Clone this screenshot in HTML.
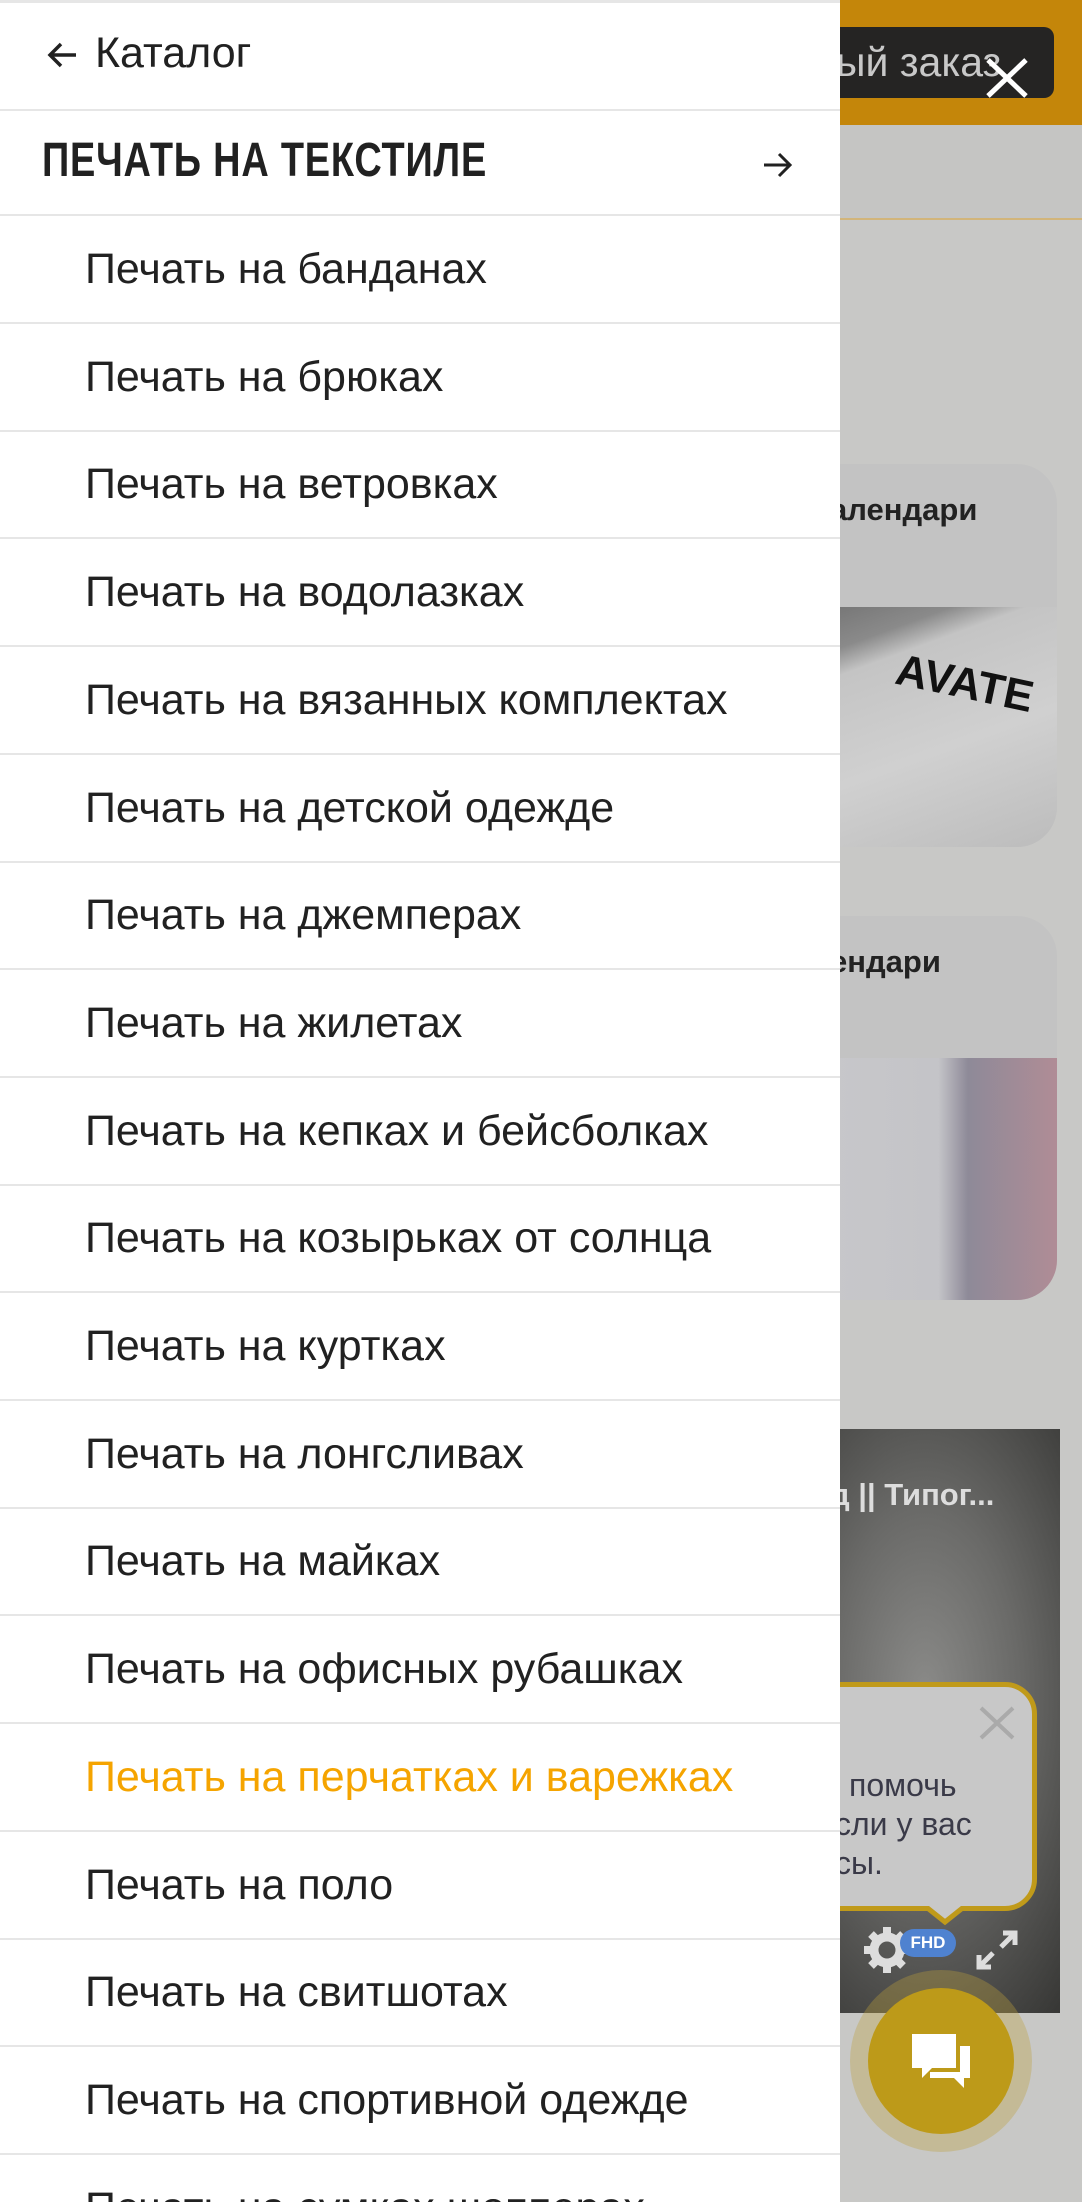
<!DOCTYPE html>
<html><head><meta charset="utf-8"><style>
*{margin:0;padding:0;box-sizing:border-box}
html,body{width:1082px;height:2202px;overflow:hidden}
body{background:#c8c8c6;position:relative;font-family:"Liberation Sans",sans-serif}
.abs{position:absolute}
#panel{position:absolute;left:0;top:0;width:840px;height:2202px;background:#fff;border-top:3px solid #e6e6e6;overflow:hidden}
.row{position:absolute;left:0;width:840px;height:108px;border-bottom:2px solid #e6e6e6;color:#212121;font-size:43px;line-height:106px;padding-left:85px;white-space:nowrap}
</style></head><body>
<div class="abs" style="left:0;top:0;width:1082px;height:125px;background:#c4860a"></div>
<div class="abs" style="left:780px;top:27px;width:274px;height:71px;background:#252423;border-radius:10px;color:#c8c8c8;font-size:41px;line-height:71px;padding-left:56px">ый заказ</div>
<svg class="abs" style="left:984px;top:56px" width="46" height="44"><path d="M4 4L42 40M42 4L4 40" stroke="#fff" stroke-width="5"/></svg>
<div class="abs" style="left:0;top:125px;width:1082px;height:95px;background:#c5c5c3;border-bottom:2px solid #d2b57a"></div>

<div class="abs" style="left:760px;top:464px;width:297px;height:383px;background:#c3c3c3;border-radius:40px;overflow:hidden">
 <div class="abs" style="left:70px;top:28px;font-size:31px;font-weight:bold;color:#222">алендари</div>
 <div class="abs" style="left:0;top:143px;width:297px;height:240px;background:linear-gradient(160deg,#6a6a6a 0%,#8a8a8a 20%,#c4c4c4 28%,#d0d0d0 60%,#bcbcbc 100%)"></div>
 <div class="abs" style="left:135px;top:195px;font-size:44px;font-weight:bold;color:#111;transform:rotate(12deg)">AVATE</div>
</div>
<div class="abs" style="left:760px;top:916px;width:297px;height:384px;background:#c3c3c3;border-radius:40px;overflow:hidden">
 <div class="abs" style="left:70px;top:28px;font-size:31px;font-weight:bold;color:#222">ендари</div>
 <div class="abs" style="left:0;top:142px;width:297px;height:242px;background:linear-gradient(90deg,#c9c9cb 0%,#c4c4c8 60%,#8e8a98 70%,#b08c96 100%)"></div>
</div>

<div class="abs" style="left:760px;top:1429px;width:300px;height:584px;background:radial-gradient(ellipse at 55% 45%,#8a8a88 0%,#6a6a68 40%,#2e2e2c 100%)">
 <div class="abs" style="left:70px;top:48px;font-size:31px;font-weight:bold;color:#ddd">д || Типог...</div>
</div>
<div class="abs" style="left:760px;top:1682px;width:277px;height:229px;background:#c8c8c8;border:5px solid #c09a1a;border-radius:32px"></div>
<svg class="abs" style="left:925px;top:1906px" width="40" height="20"><path d="M0 0L20 16L40 0" fill="#c8c8c8" stroke="#c09a1a" stroke-width="5"/></svg>
<svg class="abs" style="left:978px;top:1705px" width="38" height="36"><path d="M3 3L35 33M35 3L3 33" stroke="#aaa" stroke-width="4"/></svg>
<div class="abs" style="left:849px;top:1766px;font-size:32px;color:#3a3a48;line-height:39px">помочь</div>
<div class="abs" style="left:835px;top:1805px;font-size:32px;color:#3a3a48;line-height:39px">сли у вас</div>
<div class="abs" style="left:835px;top:1844px;font-size:32px;color:#3a3a48;line-height:39px">сы.</div>
<svg class="abs" style="left:862px;top:1925px" width="50" height="50"><circle cx="25" cy="25" r="13" fill="none" stroke="#ddd" stroke-width="9"/><g stroke="#ddd" stroke-width="8"><path d="M25 2v8M25 40v8M2 25h8M40 25h8M9 9l6 6M35 35l6 6M9 41l6-6M41 9l-6 6"/></g></svg>
<div class="abs" style="left:900px;top:1929px;width:56px;height:28px;border-radius:14px;background:#4f82d0;color:#fff;font-size:17px;font-weight:bold;text-align:center;line-height:28px">FHD</div>
<svg class="abs" style="left:974px;top:1928px" width="46" height="44"><g stroke="#ddd" stroke-width="5" fill="none"><path d="M5 39L19 25M5 27v12h12M41 5L27 19M29 5h12v12"/></g></svg>
<div class="abs" style="left:850px;top:1970px;width:182px;height:182px;border-radius:50%;background:rgba(190,160,60,.35)"></div>
<div class="abs" style="left:868px;top:1988px;width:146px;height:146px;border-radius:50%;background:#bd9a19"></div>
<svg class="abs" style="left:908px;top:2030px" width="66" height="62"><path d="M4 4h44v34H24l-10 10V38H4z" fill="#fff"/><path d="M52 16h10v32h-6v10l-10-10H22v-6h30z" fill="#fff"/></svg>

<div id="panel">
 <div class="row" style="top:-3px;height:111px;line-height:106px;padding-left:95px">Каталог</div>
 <svg class="abs" style="left:46px;top:38px" width="32" height="28"><path d="M30 14H4M15 3L4 14l11 11" stroke="#212121" stroke-width="3.5" fill="none"/></svg>
 <div class="row" style="top:105px;padding-left:0"><div style="position:absolute;left:42px;top:0;font-weight:bold;font-size:48px;transform:scaleX(0.79);transform-origin:left center;letter-spacing:1px">ПЕЧАТЬ НА ТЕКСТИЛЕ</div></div>
 <svg class="abs" style="left:762px;top:148px" width="32" height="28"><path d="M2 14h26M17 3l11 11-11 11" stroke="#212121" stroke-width="3" fill="none"/></svg>
 <div class="row" style="top:213px">Печать на банданах</div>
 <div class="row" style="top:320.7px">Печать на брюках</div>
 <div class="row" style="top:428.4px">Печать на ветровках</div>
 <div class="row" style="top:536.1px">Печать на водолазках</div>
 <div class="row" style="top:643.8px">Печать на вязанных комплектах</div>
 <div class="row" style="top:751.5px">Печать на детской одежде</div>
 <div class="row" style="top:859.2px">Печать на джемперах</div>
 <div class="row" style="top:966.9px">Печать на жилетах</div>
 <div class="row" style="top:1074.6px">Печать на кепках и бейсболках</div>
 <div class="row" style="top:1182.3px">Печать на козырьках от солнца</div>
 <div class="row" style="top:1290px">Печать на куртках</div>
 <div class="row" style="top:1397.7px">Печать на лонгсливах</div>
 <div class="row" style="top:1505.4px">Печать на майках</div>
 <div class="row" style="top:1613.1px">Печать на офисных рубашках</div>
 <div class="row" style="top:1720.8px;color:#f5a400">Печать на перчатках и варежках</div>
 <div class="row" style="top:1828.5px">Печать на поло</div>
 <div class="row" style="top:1936.2px">Печать на свитшотах</div>
 <div class="row" style="top:2043.9px">Печать на спортивной одежде</div>
 <div class="row" style="top:2151.6px">Печать на сумках шопперах</div>
</div>
</body></html>
